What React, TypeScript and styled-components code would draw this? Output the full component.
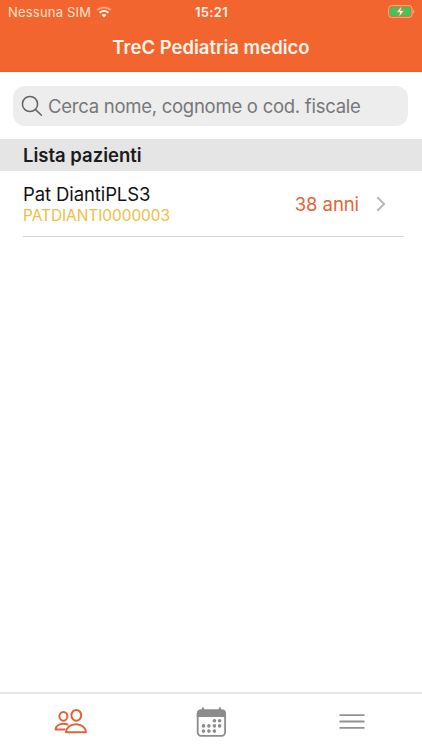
import React from "react";
import styled, { createGlobalStyle } from "styled-components";

const GlobalStyle = createGlobalStyle`
  * { box-sizing: border-box; }
  body { margin: 0; background: #fff; font-family: Inter, "Liberation Sans", sans-serif; }
  svg { display: block; flex: none; }
`;

const Screen = styled.div`
  display: flex;
  flex-direction: column;
  width: 422px;
  height: 750px;
  overflow: hidden;
  background: #fff;
`;

const Header = styled.header`
  height: 72px;
  flex: none;
  background: #f2652f;
  border-bottom: 1px solid #e8602f;
  color: #fff4ea;
`;

const StatusBar = styled.div`
  display: grid;
  grid-template-columns: 1fr auto 1fr;
  align-items: center;
  height: 24px;
  padding: 0 7px 0 8px;
`;

const Carrier = styled.div`
  display: flex;
  align-items: center;
  gap: 5px;
`;

const BatterySlot = styled.div`
  justify-self: end;
  padding-bottom: 1px;
`;

interface TextProps {
  $size: number;
  $weight?: number;
  $spacing?: number;
  $color?: string;
  $line?: number;
}

const Text = styled.span<TextProps>`
  font-size: ${(p) => p.$size}px;
  font-weight: ${(p) => p.$weight ?? 400};
  letter-spacing: ${(p) => p.$spacing ?? 0}px;
  line-height: ${(p) => p.$line ?? 24}px;
  color: ${(p) => p.$color ?? "inherit"};
  white-space: nowrap;
`;

const TitleBar = styled.div`
  display: flex;
  justify-content: center;
  height: 47px;
`;

const SearchArea = styled.div`
  flex: none;
  padding: 14px 14px 13px 13px;
`;

const SearchField = styled.div`
  display: flex;
  align-items: center;
  gap: 5px;
  height: 40px;
  padding-left: 8px;
  border-radius: 12px;
  background: #ededed;
`;

const SectionHeader = styled.h2`
  display: flex;
  flex: none;
  height: 32px;
  margin: 0;
  padding-left: 23px;
  background: #e5e5e5;
`;

const PatientList = styled.main`
  flex: 1;
  padding: 0 18px 0 23px;
`;

const PatientRow = styled.div`
  display: flex;
  align-items: center;
  height: 66px;
  border-bottom: 1px solid #d7d7d9;
`;

const Identity = styled.div`
  display: flex;
  flex: 1;
  flex-direction: column;
  padding-top: 1px;
`;

const Age = styled.div`
  display: flex;
  align-items: center;
  gap: 17px;
  padding-right: 18px;
`;

const TabBar = styled.nav`
  display: grid;
  grid-template-columns: repeat(3, 1fr);
  flex: none;
  height: 58px;
  border-top: 2px solid #e6e6e6;
`;

const Tab = styled.div`
  display: flex;
  justify-content: center;
  padding-top: 13px;
`;

const WifiIcon = () => (
  <svg width="16" height="12" viewBox="0 0 16 12" fill="none">
    <path d="M1.2 4.1C5.1.5 10.9.5 14.8 4.1" stroke="#f9a47c" strokeWidth="2" />
    <path d="M3.5 6.7c2.6-2.4 6.4-2.4 9 0" stroke="#fff8f0" strokeWidth="2" />
    <path d="M8 11.6 5.5 9c1.4-1.3 3.6-1.3 5 0z" fill="#fff8f0" />
  </svg>
);

const BatteryIcon = () => (
  <svg width="27" height="13" viewBox="0 0 27 13">
    <rect x=".6" y=".6" width="23.4" height="11.8" rx="3" fill="none" stroke="#f7b38f" />
    <rect x="2.2" y="2.2" width="20.2" height="8.6" rx="1.6" fill="#37ca59" />
    <path d="M25.2 4.4c1.5.6 1.5 3.6 0 4.2z" fill="#f7b38f" />
    <path d="M13.8.8 8.6 7.3h3.3l-1.3 5 5.4-6.6h-3.4z" fill="#fff" stroke="#ef7645" strokeWidth=".7" />
  </svg>
);

const SearchIcon = () => (
  <svg width="22" height="22" viewBox="0 0 22 22" fill="none" stroke="#646464" strokeWidth="1.5" strokeLinecap="round">
    <circle cx="9" cy="9" r="7.6" />
    <path d="m14.6 14.6 5.8 5.6" />
  </svg>
);

const ChevronIcon = () => (
  <svg width="10" height="16" viewBox="0 0 10 16" fill="none" stroke="#b8b8ba" strokeWidth="2">
    <path d="m1.3 1.2 6.8 6.8-6.8 6.8" />
  </svg>
);

const PatientsIcon = () => (
  <svg width="34" height="28" viewBox="-1.4 -1.2 34 28" fill="none" stroke="#e16335" strokeWidth="2" strokeLinejoin="round">
    <ellipse cx="9" cy="8.1" rx="4" ry="4.4" />
    <ellipse cx="21.9" cy="7.1" rx="4.9" ry="5.4" />
    <path d="M10.9 21.3H1.2c.3-3.5 3.6-5.8 7.8-5.8 1.8 0 3.5.4 4.7 1.1" />
    <path d="M11.6 24.1c.3-4.7 4.2-8.1 10-8.1s9.6 3.4 9.9 8.1z" />
  </svg>
);

const calendarDots = [
  [18, 13.3], [23.2, 13.3],
  [7.1, 18.5], [12.5, 18.5], [18, 18.5], [23.2, 18.5],
  [7.1, 23.7], [12.5, 23.7], [18, 23.7],
];

const CalendarIcon = () => (
  <svg width="30" height="30" viewBox="-.4 -.4 30 30">
    <path d="M6.6 0v4M23.5 0v4" stroke="#8c8c8c" strokeWidth="2.2" />
    <rect x="1.3" y="3" width="27.4" height="25.4" rx="3.5" fill="#fff" stroke="#8c8c8c" strokeWidth="1.8" />
    <path d="M.4 9.7V6a4 4 0 0 1 4-4h21.2a4 4 0 0 1 4 4v3.7z" fill="#8c8c8c" />
    {calendarDots.map(([x, y]) => (
      <circle key={`${x}-${y}`} cx={x} cy={y} r="1.8" fill="#8c8c8c" />
    ))}
  </svg>
);

const MenuIcon = () => (
  <svg width="26" height="30" viewBox="0 0 26 30" stroke="#929292" strokeWidth="1.9">
    <path d="M.5 8.1h25M.5 14.5h25M.5 20.9h25" />
  </svg>
);

export default function App() {
  return (
    <Screen>
      <GlobalStyle />
      <Header>
        <StatusBar>
          <Carrier>
            <Text $size={13} $spacing={0.2} $color="#ffe3d0">Nessuna SIM</Text>
            <WifiIcon />
          </Carrier>
          <Text $size={13} $weight={600} $spacing={0.35}>15:21</Text>
          <BatterySlot>
            <BatteryIcon />
          </BatterySlot>
        </StatusBar>
        <TitleBar>
          <Text $size={18.5} $weight={600} $line={47}>TreC Pediatria medico</Text>
        </TitleBar>
      </Header>
      <SearchArea>
        <SearchField>
          <SearchIcon />
          <Text $size={18.5} $spacing={-0.26} $color="#77777a">Cerca nome, cognome o cod. fiscale</Text>
        </SearchField>
      </SearchArea>
      <SectionHeader>
        <Text $size={18.5} $weight={600} $line={32} $color="#1b1b1b">Lista pazienti</Text>
      </SectionHeader>
      <PatientList>
        <PatientRow>
          <Identity>
            <Text $size={18.5} $spacing={-0.1} $line={22} $color="#111">Pat DiantiPLS3</Text>
            <Text $size={15.5} $spacing={-0.08} $line={21} $color="#f2bd42">PATDIANTI0000003</Text>
          </Identity>
          <Age>
            <Text $size={18.5} $spacing={-0.08} $color="#e46238">38 anni</Text>
            <ChevronIcon />
          </Age>
        </PatientRow>
      </PatientList>
      <TabBar>
        <Tab><PatientsIcon /></Tab>
        <Tab><CalendarIcon /></Tab>
        <Tab><MenuIcon /></Tab>
      </TabBar>
    </Screen>
  );
}
